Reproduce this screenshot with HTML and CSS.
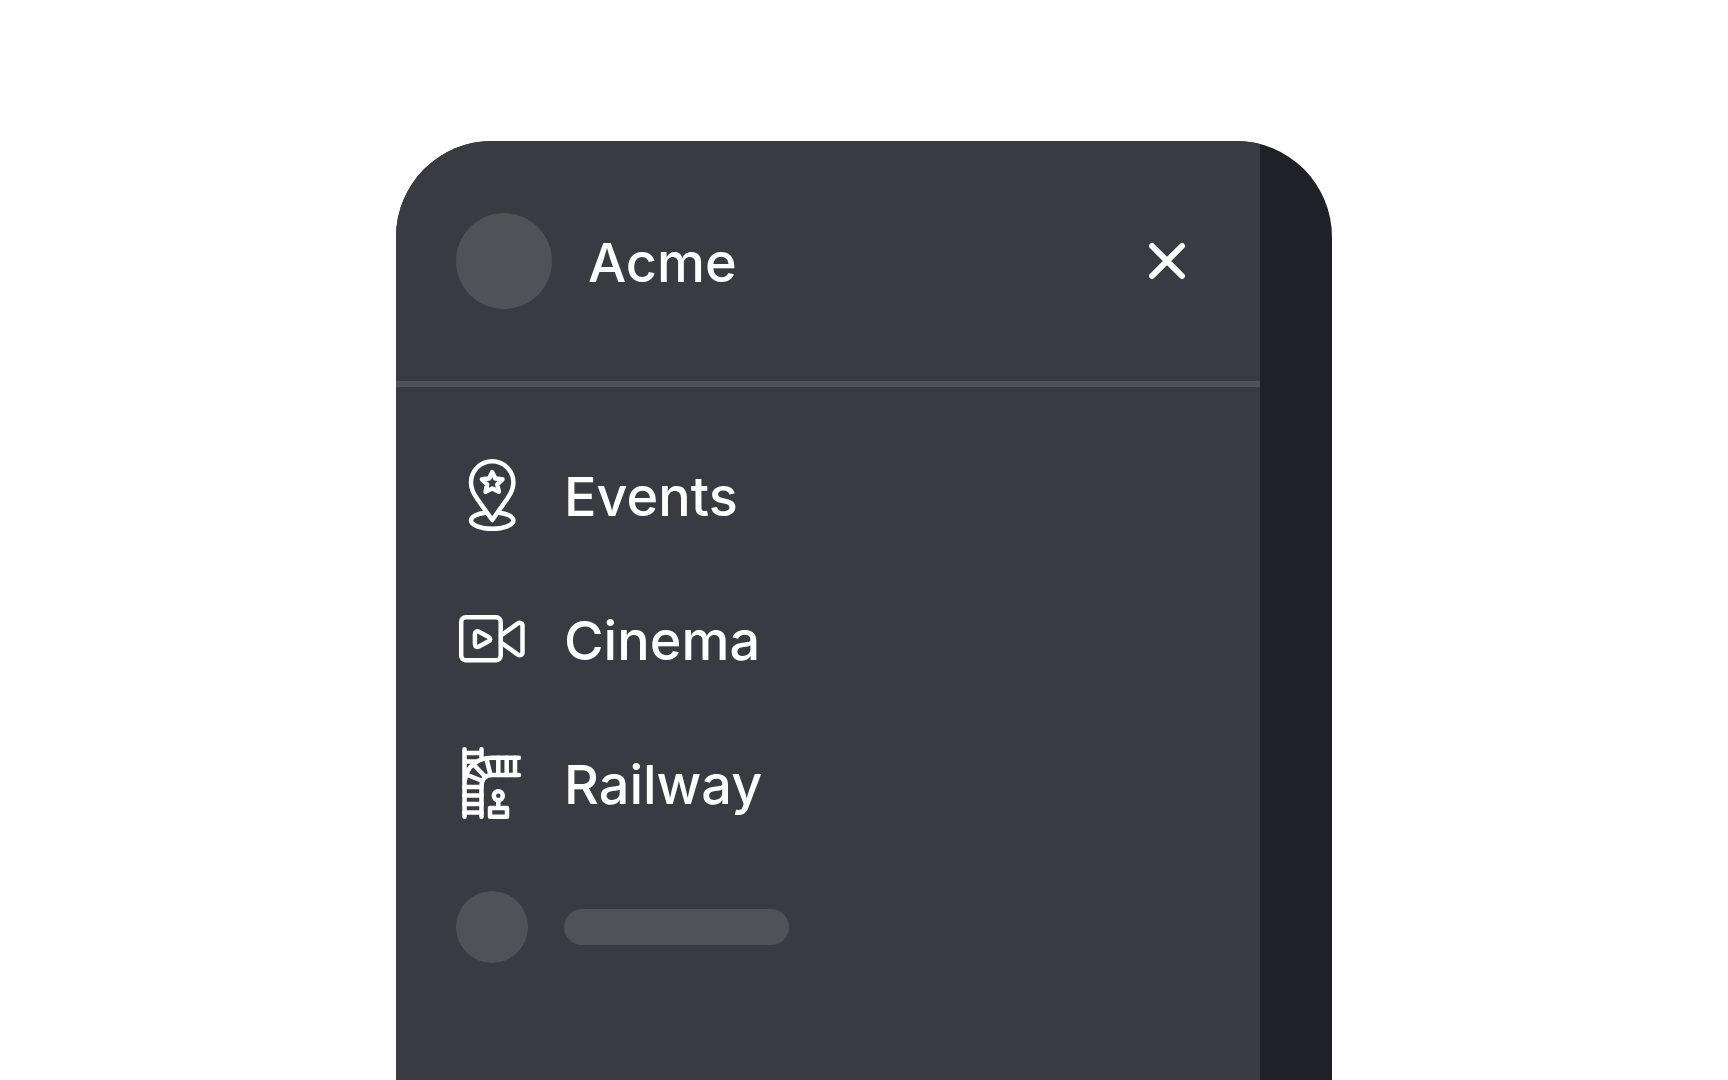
FILE: index.html
```html
<!DOCTYPE html>
<html lang="en">
<head>
<meta charset="utf-8">
<meta name="viewport" content="width=device-width, initial-scale=1">
<title>Acme</title>
<link rel="stylesheet" href="styles.css">
</head>
<body>
<main class="stage">
  <div class="device">
    <aside class="drawer">
      <header class="drawer-header">
        <span class="avatar"></span>
        <span class="brand">Acme</span>
        <button class="close" type="button" aria-label="Close menu">
          <svg class="icon" viewBox="0 0 72 72" aria-hidden="true"><path class="thick" d="M21 21l30 30M51 21l-30 30"/></svg>
        </button>
      </header>
      <nav class="menu">
        <a class="item" href="#events">
          <svg class="icon" viewBox="0 0 72 72" aria-hidden="true">
            <path d="M36.2 61L21 39.500C17 34 15 29 15 23.500a21.200 21.200 0 0 1 42.400 0C57.400 29 55.400 34 51.400 39.500Z"/>
            <path d="M29.500 53.800C21 54.600 15 57.500 15 61.500a21.200 8.200 0 0 0 42.400 0c0-4-6-6.900-14.500-7.700"/>
            <path d="M36.200 13.200l3.100 6.300 7.200.8-5.200 5 1.500 7.500-6.600-3.200-6.600 3.200 1.500-7.500-5.200-5 7.200-.8Z"/>
          </svg>
          <span class="label">Events</span>
        </a>
        <a class="item" href="#cinema">
          <svg class="icon" viewBox="0 0 72 72" aria-hidden="true">
            <rect x="5.200" y="14.200" width="39.500" height="43" rx="4.500"/>
            <path d="M18.900 31.200c0-2.500 1.900-3.500 4-2.400l9.800 5.200c2 1.100 2 3.200 0 4.300l-9.800 5.200c-2.100 1.100-4 0-4-2.400Z"/>
            <path d="M45 32.500l16.500-11.800c2.500-1.700 5-.7 5 2v26.600c0 2.700-2.500 3.700-5 2l-16.500-11.800"/>
          </svg>
          <span class="label">Cinema</span>
        </a>
        <a class="item" href="#railway">
          <svg class="icon" viewBox="0 0 72 72" aria-hidden="true">
            <path d="M8.500 2.200v67.500M25.500 2.200v10M8.500 6h17M8.500 14.500h11"/>
            <path d="M63 10.800H36C21 10.800 10.500 20 9 33"/>
            <path d="M63 28H36c-6.500 0-10.500 4.500-10.500 11v30.700"/>
            <path d="M8.500 40h17M8.500 48.500h17M8.500 57h17M8.500 65.500h17M42.300 10.800V28M50.700 10.800V28M59 10.800V28"/>
            <path d="M30.500 12l4 16M18.500 18.500l11 11.500M11.500 28l15 6"/>
            <circle cx="42.300" cy="48.800" r="4.500"/>
            <path d="M42.300 53v8M34 61h17v8.700H34Z"/>
          </svg>
          <span class="label">Railway</span>
        </a>
        <div class="item" aria-hidden="true">
          <span class="dot"></span>
          <span class="bar"></span>
        </div>
      </nav>
    </aside>
  </div>
</main>
</body>
</html>
```
FILE: styles.css
```css
* { box-sizing: border-box; }

body {
  margin: 0;
  background: #fff;
  font-family: Inter, "Liberation Sans", sans-serif;
}

.stage {
  display: flex;
  justify-content: center;
  min-height: 100vh;
  padding-top: 141px;
}

.device {
  display: flex;
  width: 100%;
  max-width: 936px;
  padding-right: 72px;
  overflow: hidden;
  border-radius: 96px 96px 0 0;
  background: #202028;
}

.drawer {
  flex: 1;
  background: #3a3a42;
  color: #fff;
  font-size: 54px;
  font-weight: 500;
  line-height: 72px;
}

.drawer-header {
  display: flex;
  align-items: center;
  gap: 36px;
  padding: 72px 57px 72px 60px;
  border-bottom: 6px solid #515257;
}

.avatar {
  width: 96px;
  height: 96px;
  border-radius: 50%;
  background: #515257;
}

.brand, .label { padding-top: 4px; }

.close {
  margin-left: auto;
  padding: 0;
  border: 0;
  background: none;
  color: inherit;
  cursor: pointer;
}

.icon {
  display: block;
  flex: none;
  width: 72px;
  height: 72px;
  fill: none;
  stroke: currentColor;
  stroke-width: 4.5;
  stroke-linecap: round;
  stroke-linejoin: round;
}

.thick { stroke-width: 6; }

.menu {
  display: flex;
  flex-direction: column;
  gap: 72px;
  padding: 72px 60px;
}

.item {
  display: flex;
  align-items: center;
  gap: 36px;
  height: 72px;
  color: inherit;
  text-decoration: none;
}

.dot {
  width: 72px;
  height: 72px;
  border-radius: 50%;
  background: #515257;
}

.bar {
  width: 225px;
  height: 36px;
  border-radius: 18px;
  background: #515257;
}
```
